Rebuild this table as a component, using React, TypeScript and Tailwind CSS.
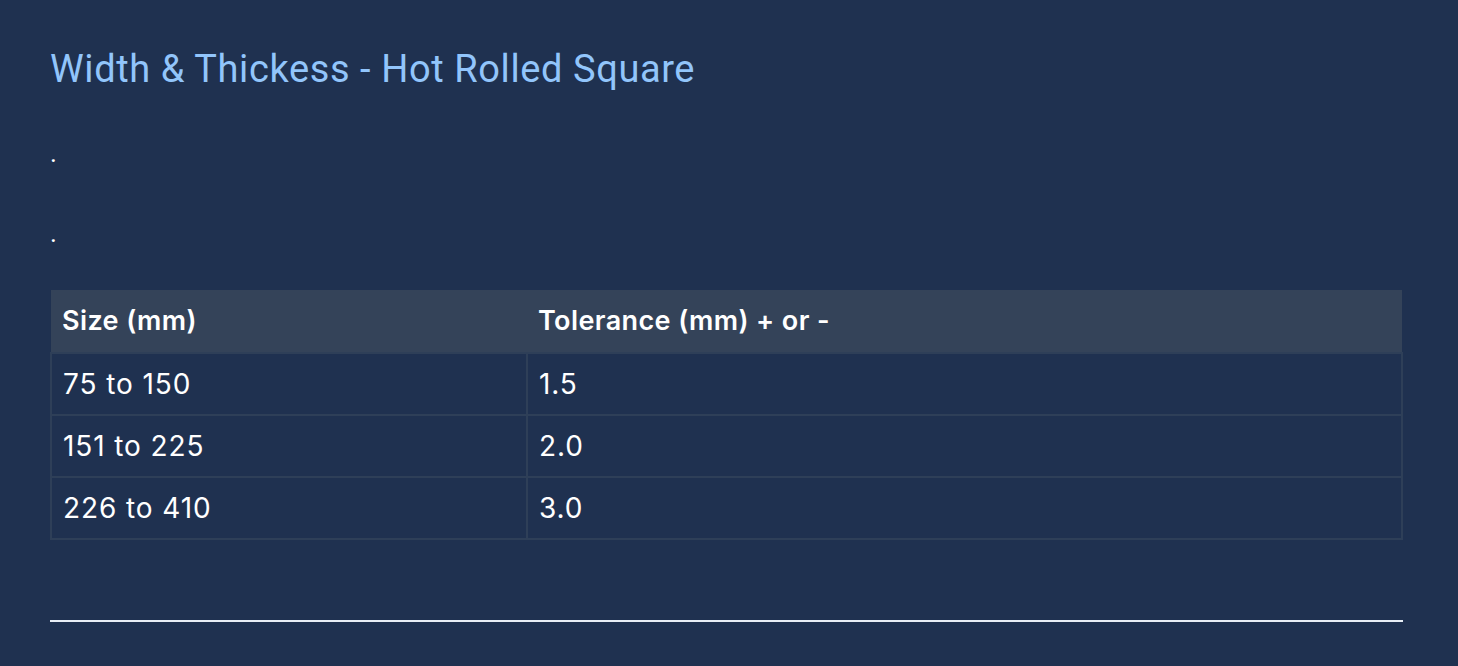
export default function App() {
  const rows = [
    ["75 to 150", "1.5"],
    ["151 to 225", "2.0"],
    ["226 to 410", "3.0"],
  ];

  return (
    <main className="min-h-screen bg-[#1f3150] px-[50px] pt-[47px] pb-[44px] text-white font-['Roboto',sans-serif]">
      <h1 className="text-[38px] leading-[44px] text-[#92c5fb] tracking-[0.6px]">
        Width &amp; Thickess - Hot Rolled Square
      </h1>

      <p className="mt-[42px] text-[26px] leading-[40px]">.</p>
      <p className="mt-[40px] text-[26px] leading-[40px]">.</p>

      <table className="mt-[37px] w-[1353px] border-collapse font-['Inter',sans-serif]">
        <thead>
          <tr className="bg-[#344359] text-[27px] tracking-[0.4px]">
            <th className="h-[63px] w-[476px] px-[11px] text-left font-semibold">Size (mm)</th>
            <th className="h-[63px] px-[11px] text-left font-semibold">Tolerance (mm) + or -</th>
          </tr>
        </thead>
        <tbody className="text-[28px] tracking-[0.9px]">
          {rows.map((r) => (
            <tr key={r[0]}>
              <td className="h-[62px] border-2 border-[#2e3f58] px-[11px]">{r[0]}</td>
              <td className="h-[62px] border-2 border-[#2e3f58] px-[11px]">{r[1]}</td>
            </tr>
          ))}
        </tbody>
      </table>

      <hr className="mt-[80px] w-[1353px] border-0 border-t-2 border-[#e8eef6]" />
    </main>
  );
}
